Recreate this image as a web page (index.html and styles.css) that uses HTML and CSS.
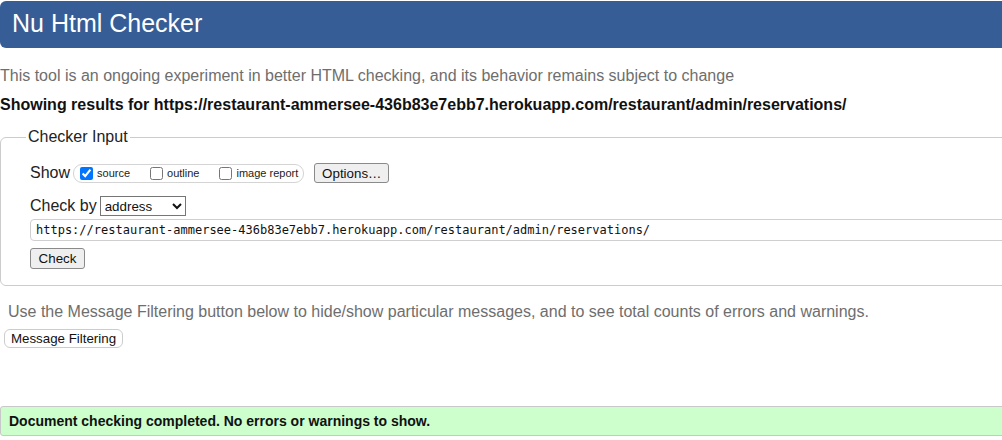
FILE: index.html
```html
<!DOCTYPE html>
<html lang="en">
<head>
<meta charset="utf-8">
<title>Nu Html Checker</title>
<link rel="stylesheet" href="styles.css">
</head>
<body>
<div class="page">
  <header class="banner"><h1 class="banner-title">Nu Html Checker</h1></header>
  <p class="intro">This tool is an ongoing experiment in better HTML checking, and its behavior remains subject to change</p>
  <p class="results">Showing results for https://restaurant-ammersee-436b83e7ebb7.herokuapp.com/restaurant/admin/reservations/</p>
  <fieldset class="checker">
    <legend class="checker-legend">Checker Input</legend>
    <div class="row show-row">
      <span class="row-label">Show</span>
      <span class="opts">
        <label class="opt"><input type="checkbox" class="cb" checked>source</label>
        <label class="opt"><input type="checkbox" class="cb">outline</label>
        <label class="opt opt-last"><input type="checkbox" class="cb">image report</label>
      </span>
      <button class="btn btn-options" type="button">Options…</button>
    </div>
    <div class="row checkby-row">
      <label class="row-label">Check by</label>
      <select class="sel"><option>address</option></select>
    </div>
    <input class="url" type="text" value="https://restaurant-ammersee-436b83e7ebb7.herokuapp.com/restaurant/admin/reservations/">
    <button class="btn btn-check" type="button">Check</button>
  </fieldset>
  <p class="filter-note">Use the Message Filtering button below to hide/show particular messages, and to see total counts of errors and warnings.</p>
  <button class="filter-btn" type="button">Message Filtering</button>
  <div class="status">Document checking completed. No errors or warnings to show.</div>
</div>
</body>
</html>
```
FILE: styles.css
```css
html {
  overflow-x: hidden;
}
body {
  margin: 0;
  font-family: "Liberation Sans", Arial, sans-serif;
  color: #222;
  background: #fff;
}
.page {
  margin-right: -20px;
}
.banner {
  margin-top: 1px;
  height: 47px;
  background: #365d95;
  border-radius: 6px;
  padding-bottom: 2px;
  box-sizing: border-box;
}
.banner-title {
  margin: 0;
  padding-left: 12px;
  font-size: 25px;
  font-weight: normal;
  line-height: 45px;
  color: #fff;
}
.intro {
  margin: 19px 0 0;
  font-size: 16px;
  line-height: 18px;
  color: #6e6e6e;
}
.results {
  margin: 11px 0 0;
  font-size: 16px;
  line-height: 18px;
  font-weight: bold;
  color: #111;
}
.checker {
  margin: 14px 0 0;
  padding: 17px 0 16px 29px;
  border: 1px solid #cccccc;
  border-radius: 6px;
  min-width: 0;
}
.checker-legend {
  margin-left: -4px;
  padding: 0 2px;
  font-size: 16px;
  line-height: 18px;
  color: #222;
}
.row {
  display: flex;
  align-items: center;
  height: 20px;
}
.row-label {
  font-size: 16px;
  line-height: 18px;
  margin-right: 3px;
  color: #222;
}
.opts {
  display: inline-flex;
  align-items: center;
  height: 19px;
  box-sizing: border-box;
  border: 1px solid #d4d4d4;
  border-radius: 9px;
  padding: 0 5px 0 2px;
  font-size: 11px;
  color: #222;
}
.opt {
  display: inline-flex;
  align-items: center;
  margin-right: 16px;
}
.opt-last {
  margin-right: 0;
}
.cb {
  width: 13px;
  height: 13px;
  margin: 0 4px 0 4px;
}
.btn {
  box-sizing: border-box;
  font-family: "Liberation Sans", Arial, sans-serif;
  font-size: 13.33px;
  color: #111;
  background: #efefef;
  border: 1px solid #8a8a8a;
  border-radius: 3px;
  padding: 0 6px;
}
.btn-options {
  margin-left: 10px;
  width: 75px;
  height: 20px;
}
.checkby-row {
  margin-top: 13px;
}
.checkby-row .row-label {
  margin-right: 3px;
}
.sel {
  width: 86px;
  height: 20px;
  font-family: "Liberation Sans", Arial, sans-serif;
  font-size: 13.33px;
  color: #111;
  background: #fff;
  border: 1px solid #767676;
  border-radius: 0;
}
.url {
  display: block;
  box-sizing: border-box;
  margin-top: 3px;
  width: 100%;
  height: 22px;
  padding: 0 5px;
  border: 1px solid #cfcfcf;
  border-radius: 4px;
  font-family: "DejaVu Sans Mono", "Liberation Mono", monospace;
  font-size: 12px;
  color: #111;
}
.btn-check {
  display: block;
  margin-top: 7px;
  width: 55px;
  height: 21px;
}
.filter-note {
  margin: 17px 0 0;
  padding-left: 8px;
  font-size: 16px;
  line-height: 18px;
  color: #6e6e6e;
}
.filter-btn {
  display: block;
  box-sizing: border-box;
  margin: 8px 0 0 4px;
  width: 119px;
  height: 19px;
  padding: 0;
  background: #fff;
  border: 1px solid #cccccc;
  border-radius: 6px;
  font-family: "Liberation Sans", Arial, sans-serif;
  font-size: 13.33px;
  color: #111;
}
.status {
  margin-top: 58px;
  height: 30px;
  box-sizing: border-box;
  background: #ccffcc;
  border: 1px solid #c8c8c8;
  border-radius: 3px;
  padding-left: 8px;
  font-size: 14px;
  line-height: 28px;
  font-weight: bold;
  color: #111;
}
```
